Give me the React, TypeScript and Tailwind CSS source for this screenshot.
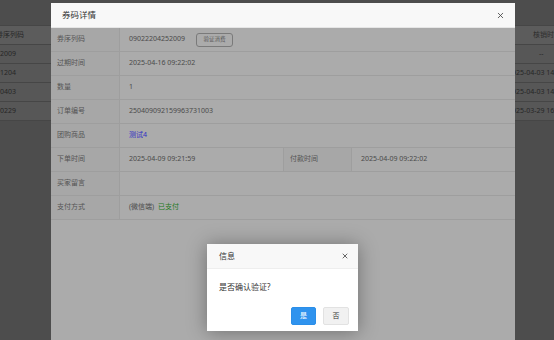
import { X } from 'lucide-react'

const font = { fontFamily: '"Noto Sans", "Noto Sans CJK SC", sans-serif' }

type Row = { label: string; value?: React.ReactNode; label2?: string; value2?: string }

const rows: Row[] = [
  {
    label: '券序列码',
    value: (
      <span className="flex items-center">
        <span>09022204252009</span>
        <span className="ml-[11px] flex h-[14px] w-[37px] items-center justify-center rounded-[3px] border border-[#7a7a7a] text-[5.5px] text-[#5a5a5a]">
          验证消费
        </span>
      </span>
    ),
  },
  { label: '过期时间', value: '2025-04-16 09:22:02' },
  { label: '数量', value: '1' },
  { label: '订单编号', value: '250409092159963731003' },
  { label: '团购商品', value: <span className="text-[#2f2fc4]">测试4</span> },
  { label: '下单时间', value: '2025-04-09 09:21:59', label2: '付款时间', value2: '2025-04-09 09:22:02' },
  { label: '买家留言', value: '' },
  {
    label: '支付方式',
    value: (
      <span>
        (微信端) <span className="ml-[2px] text-[#1d7a1d]">已支付</span>
      </span>
    ),
  },
]

const pageRows = [
  ['2009', '--'],
  ['1204', '2025-04-03 14:00'],
  ['0403', '2025-04-03 14:00'],
  ['0229', '2025-03-29 16:00'],
]

export default function App() {
  return (
    <div className="relative h-[340px] w-[554px] overflow-hidden bg-[#4d4d4d]" style={font}>
      {/* Page behind */}
      <div className="flex flex-col text-[7px] text-[#262626]">
        <div className="h-[25px]" />
        <div className="flex h-[20px] items-center whitespace-nowrap border-y border-[#464646] bg-[#5c5c5c]">
          <span className="ml-[-4px] w-[537px] shrink-0">券序列码</span>
          <span className="shrink-0 text-[#2e2e2e]">核销时间</span>
        </div>
        {pageRows.map(([a, b], i) => (
          <div key={i} className="flex h-[19px] items-center whitespace-nowrap border-b border-[#464646] bg-[#575757]">
            <span className={b === '--' ? 'w-[539px] shrink-0' : 'w-[508px] shrink-0'}>{a}</span>
            <span className="shrink-0">{b}</span>
          </div>
        ))}
      </div>

      {/* Outer dialog */}
      <div className="absolute bottom-0 left-[51px] top-[3px] flex w-[464px] flex-col">
        <div className="flex h-[25px] items-center justify-between border-b border-[#e6e6e6] bg-[#f8f8f8] pl-[11px] pr-[10px]">
          <span className="text-[8.5px] text-[#333]">券码详情</span>
          <X className="h-[9px] w-[9px] text-[#444]" strokeWidth={2.2} />
        </div>
        <div className="relative flex-1 bg-[#ababab]">
          <div className="flex flex-col text-[7px]">
            {rows.map((r, i) => (
              <div key={i} className="flex h-[24px] border-b border-[#9e9e9e]">
                <div className="flex w-[69px] items-center border-r border-[#9e9e9e] bg-[#a7a7a7] pl-[6px] text-[#555]">
                  {r.label}
                </div>
                {r.label2 ? (
                  <>
                    <div className="flex w-[163px] items-center bg-[#ababab] pl-[9px] text-[#4a4a4a]">{r.value}</div>
                    <div className="flex w-[69px] items-center border-x border-[#9e9e9e] bg-[#a7a7a7] pl-[6px] text-[#555]">
                      {r.label2}
                    </div>
                    <div className="flex flex-1 items-center bg-[#ababab] pl-[9px] text-[#4a4a4a]">{r.value2}</div>
                  </>
                ) : (
                  <div className="flex flex-1 items-center bg-[#ababab] pl-[9px] text-[#4a4a4a]">{r.value}</div>
                )}
              </div>
            ))}
          </div>

          {/* Inner confirm dialog */}
          <div className="absolute left-[156px] top-[216px] flex h-[87px] w-[151px] flex-col bg-white shadow-[0_1px_18px_rgba(0,0,0,0.35)]">
            <div className="flex h-[25px] items-center justify-between border-b border-[#eeeeee] bg-[#f8f8f8] pl-[12px] pr-[9px]">
              <span className="text-[8px] text-[#333]">信息</span>
              <X className="h-[8px] w-[8px] text-[#333]" strokeWidth={2.2} />
            </div>
            <div className="pl-[12px] pt-[12px] text-[8px] text-[#333]">是否确认验证?</div>
            <div className="mt-auto mb-[6px] flex justify-end gap-[7px] pr-[9px]">
              <div className="flex h-[18px] w-[25px] items-center justify-center rounded-[2px] border border-[#2b8ee8] bg-[#2f93ee] text-[7px] text-white">
                是
              </div>
              <div className="flex h-[18px] w-[26px] items-center justify-center rounded-[2px] border border-[#e2e2e2] bg-[#f1f1f1] text-[7px] text-[#333]">
                否
              </div>
            </div>
          </div>
        </div>
      </div>
    </div>
  )
}
